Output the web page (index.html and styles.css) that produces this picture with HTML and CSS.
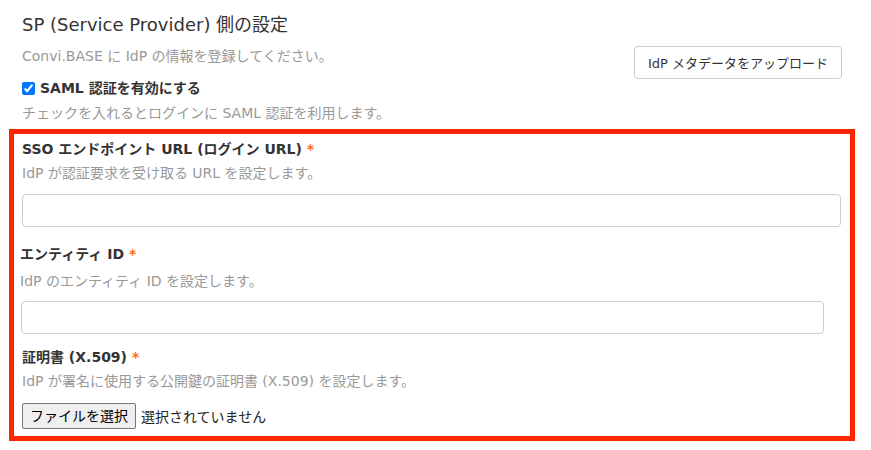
FILE: index.html
```html
<!DOCTYPE html>
<html lang="ja">
<head>
<meta charset="utf-8">
<title>SP 側の設定</title>
<link rel="stylesheet" href="styles.css">
</head>
<body>
<div class="page">
  <div class="intro">
    <div class="intro-text">
      <h2 class="title">SP (Service Provider) 側の設定</h2>
      <p class="subtitle">Convi.BASE に IdP の情報を登録してください。</p>
      <label class="check-row"><input type="checkbox" class="check" checked><span>SAML 認証を有効にする</span></label>
      <p class="help help--check">チェックを入れるとログインに SAML 認証を利用します。</p>
    </div>
    <button class="upload-btn" type="button">IdP メタデータをアップロード</button>
  </div>
  <div class="highlight">
    <div class="field">
      <div class="label">SSO エンドポイント URL (ログイン URL) <span class="req">*</span></div>
      <p class="help">IdP が認証要求を受け取る URL を設定します。</p>
      <input class="text-input" type="text">
    </div>
    <div class="field field--entity">
      <div class="label">エンティティ ID <span class="req">*</span></div>
      <p class="help help--entity">IdP のエンティティ ID を設定します。</p>
      <input class="text-input text-input--narrow" type="text">
    </div>
    <div class="field field--cert">
      <div class="label">証明書 (X.509) <span class="req">*</span></div>
      <p class="help">IdP が署名に使用する公開鍵の証明書 (X.509) を設定します。</p>
      <label class="file-control">
        <input class="file-input" type="file">
        <span class="file-btn">ファイルを選択</span>
        <span class="file-name">選択されていません</span>
      </label>
    </div>
  </div>
</div>
</body>
</html>
```
FILE: styles.css
```css
html, body {
  margin: 0;
  padding: 0;
  background: #ffffff;
}
body {
  font-family: "DejaVu Sans", "Noto Sans CJK JP", sans-serif;
  color: #333333;
  font-size: 14px;
}
.page {
  width: 871px;
  box-sizing: border-box;
  padding: 13px 16px 0 9px;
}
.intro {
  display: flex;
  justify-content: space-between;
  align-items: flex-start;
  padding: 0 13px 0 13px;
}
.intro-text {
  display: flex;
  flex-direction: column;
}
.title {
  margin: 0;
  font-size: 18px;
  font-weight: normal;
  line-height: 24px;
  color: #333333;
}
.subtitle {
  margin: 9px 0 0;
  font-size: 14px;
  line-height: 20px;
  color: #999999;
}
.check-row {
  margin-top: 12px;
  display: flex;
  align-items: center;
  font-size: 14px;
  font-weight: bold;
  line-height: 20px;
  color: #333333;
}
.check {
  width: 13px;
  height: 13px;
  margin: 0 5px 0 0;
  accent-color: #0075ff;
}
.help {
  margin: 4px 0 0;
  font-size: 14px;
  line-height: 20px;
  color: #999999;
}
.help--check {
  margin-top: 5px;
}
.upload-btn {
  margin-top: 33px;
  height: 33px;
  padding: 0 13px;
  border: 1px solid #cccccc;
  border-radius: 4px;
  background: #ffffff;
  color: #333333;
  font-family: inherit;
  font-size: 13px;
}
.highlight {
  margin-top: 6px;
  border: 5px solid #ff2600;
  padding: 5px 9px 7px 8px;
  display: flex;
  flex-direction: column;
}
.field {
  display: flex;
  flex-direction: column;
}
.label {
  font-size: 14px;
  font-weight: bold;
  line-height: 20px;
  color: #333333;
}
.req {
  color: #ff6a13;
}
.text-input {
  margin-top: 11px;
  height: 33px;
  box-sizing: border-box;
  border: 1px solid #cccccc;
  border-radius: 4px;
  background: #ffffff;
  padding: 0 8px;
  font-family: inherit;
  font-size: 13px;
}
.field--entity {
  margin-top: 17px;
  margin-left: -2px;
}
.help--entity {
  margin-top: 7px;
}
.text-input--narrow {
  margin-top: 10px;
  margin-left: 1px;
  margin-right: 17px;
}
.field--cert {
  margin-top: 13px;
}
.file-control {
  margin-top: 12px;
  display: flex;
  align-items: center;
  font-size: 14px;
  color: #333333;
}
.file-input {
  display: none;
}
.file-btn {
  box-sizing: border-box;
  height: 26px;
  padding: 0 7px;
  margin-right: 5px;
  border: 1px solid #767676;
  border-radius: 2px;
  background: #efefef;
  color: #000000;
  font-size: 14px;
  line-height: 24px;
  display: flex;
  align-items: center;
}
.file-name {
  color: #222222;
}
```
